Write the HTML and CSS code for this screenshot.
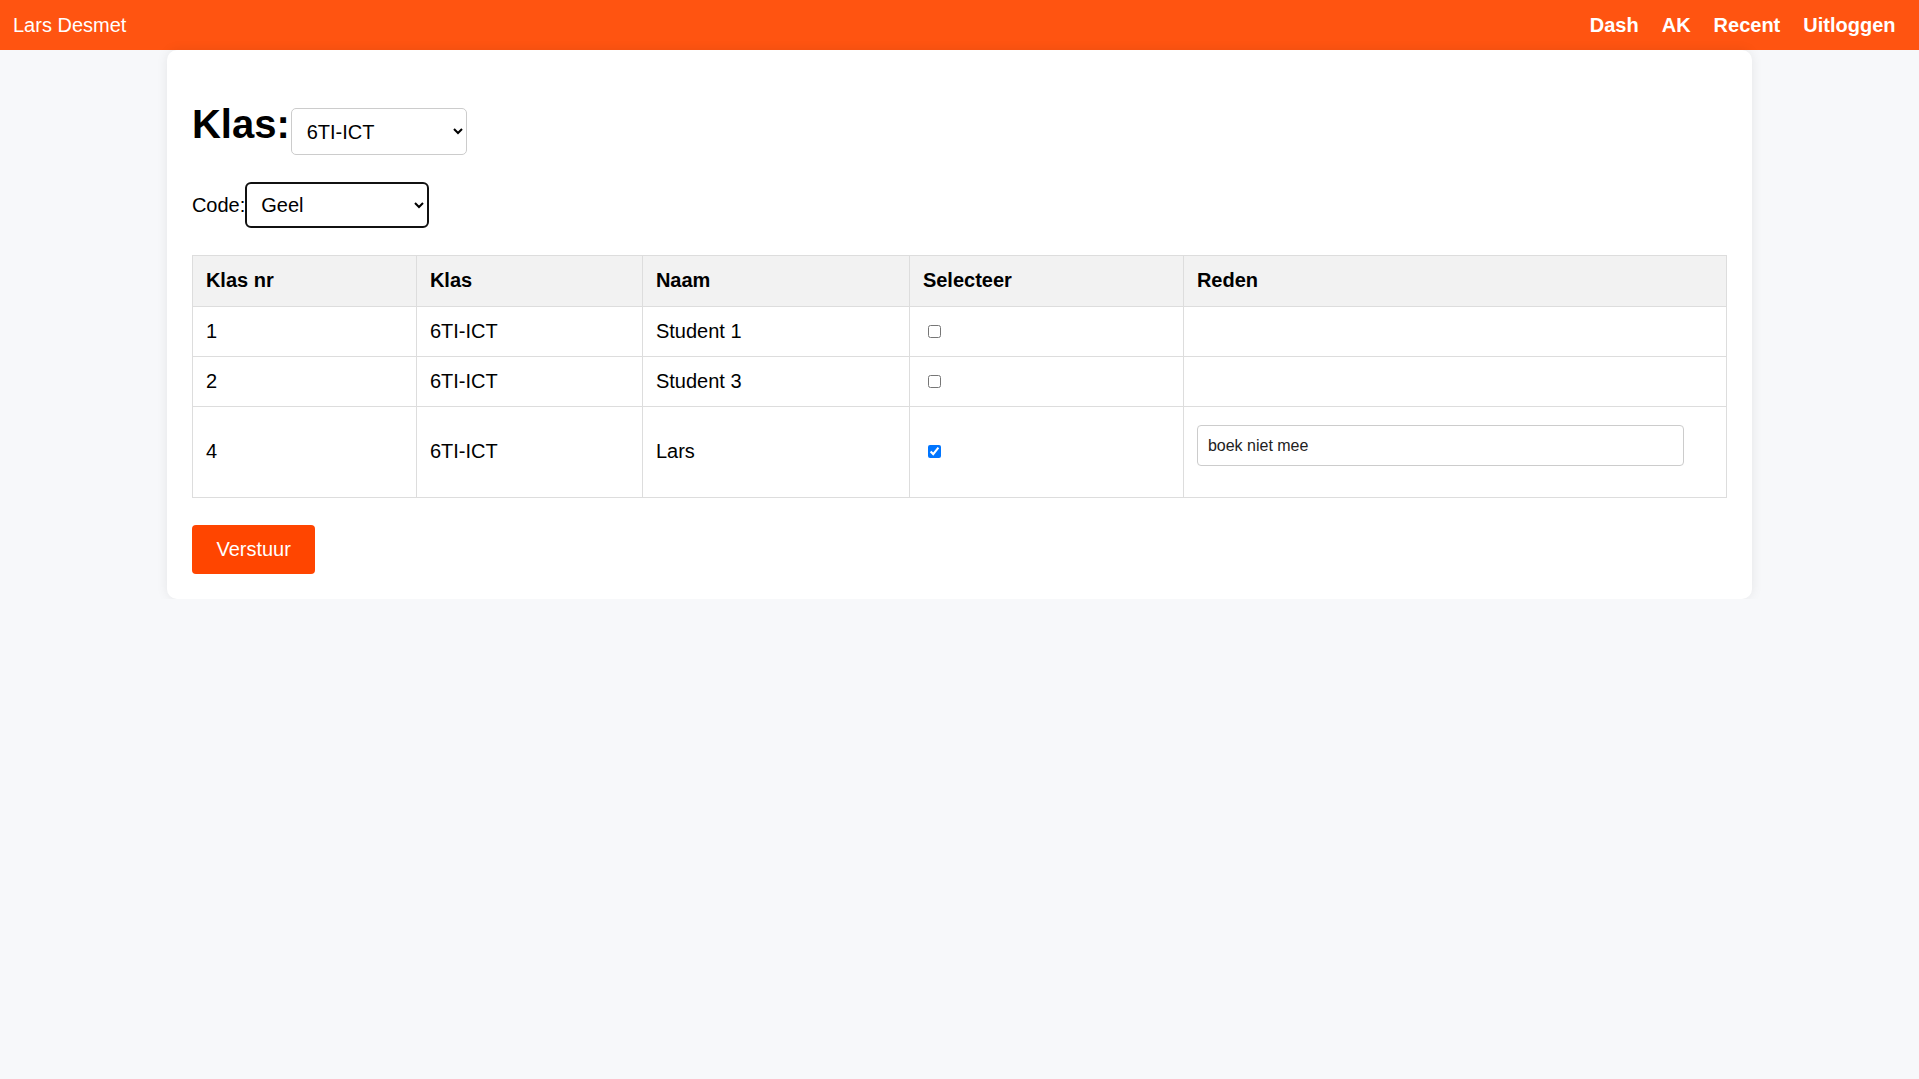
FILE: index.html
```html
<!DOCTYPE html>
<html lang="nl">
<head>
<meta charset="utf-8">
<title>Afwezigheden</title>
<link rel="stylesheet" href="styles.css">
</head>
<body>
<nav class="topbar">
  <span class="brand">Lars Desmet</span>
  <div class="links">
    <a href="#" class="link">Dash</a>
    <a href="#" class="link">AK</a>
    <a href="#" class="link">Recent</a>
    <a href="#" class="link">Uitloggen</a>
  </div>
</nav>
<main class="card">
  <h1 class="title">Klas:<select class="sel sel-klas"><option>6TI-ICT</option><option>5TI-ICT</option></select></h1>
  <div class="code-row"><label class="code-label">Code:</label><select class="sel sel-code"><option>Geel</option><option>Rood</option><option>Groen</option></select></div>
  <table class="grid">
    <colgroup>
      <col class="c1"><col class="c2"><col class="c3"><col class="c4"><col class="c5">
    </colgroup>
    <thead>
      <tr><th>Klas nr</th><th>Klas</th><th>Naam</th><th>Selecteer</th><th>Reden</th></tr>
    </thead>
    <tbody>
      <tr><td>1</td><td>6TI-ICT</td><td>Student 1</td><td><input type="checkbox" class="pick"></td><td></td></tr>
      <tr><td>2</td><td>6TI-ICT</td><td>Student 3</td><td><input type="checkbox" class="pick"></td><td></td></tr>
      <tr><td>4</td><td>6TI-ICT</td><td>Lars</td><td><input type="checkbox" class="pick" checked></td><td><input type="text" class="reason" value="boek niet mee"></td></tr>
    </tbody>
  </table>
  <button class="send" type="button">Verstuur</button>
</main>
</body>
</html>
```

FILE: styles.css
```css
html, body {
  margin: 0;
  padding: 0;
}
body {
  background: #f7f8fa;
  font-family: "Liberation Sans", Arial, sans-serif;
  font-size: 20px;
  color: #000;
}
.topbar {
  display: flex;
  justify-content: space-between;
  align-items: center;
  height: 50px;
  padding: 0 12px 0 13px;
  background: #ff5411;
  color: #fff;
}
.brand {
  font-size: 20px;
}
.links {
  display: flex;
}
.link {
  color: #fff;
  text-decoration: none;
  font-weight: bold;
  font-size: 20px;
  padding: 0 11.5px;
}
.card {
  display: block;
  width: 80%;
  margin: 0 auto;
  padding: 25px;
  background: #fff;
  border-radius: 10px;
  box-shadow: 0 0 12px rgba(0, 0, 0, 0.08);
}
.title {
  font-size: 40px;
  font-weight: bold;
  margin: 26.8px 0 27.6px;
}
.sel {
  font-family: "Liberation Sans", Arial, sans-serif;
  font-size: 20px;
  color: #000;
  background: #fff;
  box-sizing: border-box;
  vertical-align: baseline;
}
.sel-klas {
  width: 176px;
  height: 47px;
  border: 1px solid #ccc;
  border-radius: 5px;
  padding: 0 10px 0 11px;
  margin: 0 0 0 1px;
  position: relative;
  top: 1px;
}
.code-row {
  margin-bottom: 26.8px;
}
.code-label {
  font-size: 20px;
}
.sel-code {
  width: 184px;
  height: 46px;
  border: 2px solid #111;
  border-radius: 6px;
  padding: 0 10px 0 10px;
  margin: 0;
}
.grid {
  width: 100%;
  border-collapse: collapse;
  table-layout: fixed;
  font-size: 20px;
}
.c1 { width: 224px; }
.c2 { width: 226px; }
.c3 { width: 267px; }
.c4 { width: 274px; }
.grid th,
.grid td {
  border: 1px solid #ddd;
  padding: 13px 12px 13px 13px;
  text-align: left;
  vertical-align: middle;
}
.grid th {
  background: #f2f2f2;
  font-weight: bold;
  padding-top: 13.5px;
  padding-bottom: 13.5px;
}
.pick {
  margin: 3px 3px 3px 5px;
}
.reason {
  display: block;
  width: 90%;
  padding: 10px;
  margin: 5px 0 18px;
  border: 1px solid #ccc;
  border-radius: 4px;
  font-family: "Liberation Sans", Arial, sans-serif;
  font-size: 16px;
  line-height: 19.5px;
  color: #222;
  background: #fff;
}
.send {
  display: block;
  margin-top: 26.5px;
  padding: 13px 24.5px;
  border: none;
  border-radius: 4px;
  background: #ff4500;
  color: #fff;
  font-family: "Liberation Sans", Arial, sans-serif;
  font-size: 20px;
}
```
